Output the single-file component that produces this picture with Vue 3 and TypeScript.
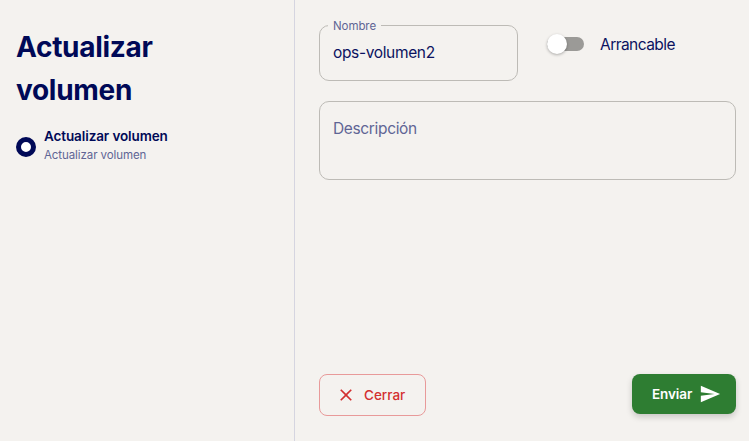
<script setup lang="ts">
import { ref } from "vue";

const nombre = ref("ops-volumen2");
const descripcion = ref("");
const arrancable = ref(false);
</script>

<template>
  <div class="page">
    <aside class="side">
      <h1>Actualizar volumen</h1>
      <div class="step">
        <span class="dot"></span>
        <div>
          <div class="step-title">Actualizar volumen</div>
          <div class="step-sub">Actualizar volumen</div>
        </div>
      </div>
    </aside>
    <main class="main">
      <div class="row">
        <fieldset class="field name">
          <legend>Nombre</legend>
          <input v-model="nombre" />
        </fieldset>
        <label class="switch">
          <span class="track"><span class="thumb"></span></span>
          <input v-model="arrancable" type="checkbox" />
          <span>Arrancable</span>
        </label>
      </div>
      <div class="field desc">
        <textarea v-model="descripcion" placeholder="Descripción"></textarea>
      </div>
      <div class="actions">
        <button class="close" type="button">
          <svg width="24" height="24" viewBox="0 0 24 24" fill="currentColor">
            <path d="M19 6.41 17.59 5 12 10.59 6.41 5 5 6.41 10.59 12 5 17.59 6.41 19 12 13.41 17.59 19 19 17.59 13.41 12z" />
          </svg>
          Cerrar
        </button>
        <button class="send" type="button">
          Enviar
          <svg width="24" height="24" viewBox="0 0 24 24" fill="currentColor">
            <path d="M2.01 21 23 12 2.01 3 2 10l15 2-15 2z" />
          </svg>
        </button>
      </div>
    </main>
  </div>
</template>

<style>
body {
  background: #f4f2ef;
}
</style>

<style scoped>
.page {
  display: flex;
  width: 749px;
  height: 441px;
  overflow: hidden;
  background: #f4f2ef;
  color: #000957;
  font-family: Inter, "Liberation Sans", sans-serif;
}
.side {
  box-sizing: border-box;
  width: 295px;
  flex: none;
  padding: 0 16px;
  border-right: 1px solid #d5d5e0;
}
h1 {
  width: 180px;
  margin: 26px 0 0;
  font-size: 28px;
  font-weight: 700;
  line-height: 43px;
  letter-spacing: -0.3px;
}
.step {
  display: flex;
  align-items: center;
  gap: 8px;
  margin-top: 15px;
}
.dot {
  box-sizing: border-box;
  width: 20px;
  height: 20px;
  border: 5px solid #000957;
  border-radius: 50%;
  background: #fff;
}
.step-title {
  font-size: 13.5px;
  font-weight: 600;
  line-height: 18px;
  letter-spacing: -0.1px;
}
.step-sub {
  font-size: 11.5px;
  line-height: 21px;
  letter-spacing: -0.08px;
  color: #5f6595;
}
.main {
  box-sizing: border-box;
  flex: 1;
  display: flex;
  flex-direction: column;
  padding: 25px 13px 25px 24px;
}
.row {
  display: flex;
  align-items: flex-start;
  gap: 29px;
}
.field {
  box-sizing: border-box;
  margin: 0;
  border: 1px solid #bdbbb6;
  border-radius: 10px;
}
.name {
  position: relative;
  width: 199px;
  height: 56px;
  padding: 0 13px;
}
legend {
  position: absolute;
  top: -7px;
  left: 8px;
  padding: 0 5px;
  background: #f4f2ef;
  font-size: 11.5px;
  line-height: 14px;
  letter-spacing: -0.08px;
  color: #5f6595;
}
.name input {
  display: block;
  width: 100%;
  height: 52px;
  padding: 0;
  border: 0;
  outline: 0;
  background: none;
  color: #0b1260;
  font: 400 15.5px Inter, "Liberation Sans", sans-serif;
  letter-spacing: -0.35px;
}
.switch {
  display: flex;
  align-items: center;
  gap: 16px;
  height: 38px;
  font-size: 15.5px;
  letter-spacing: -0.55px;
  color: #0b1260;
}
.switch input {
  display: none;
}
.track {
  position: relative;
  display: block;
  width: 37px;
  height: 14px;
  border-radius: 7px;
  background: #9b9a97;
}
.thumb {
  position: absolute;
  top: -3px;
  left: 0;
  width: 20px;
  height: 20px;
  border-radius: 50%;
  background: #fff;
  box-shadow: 0 1px 3px rgba(0, 0, 0, 0.3);
}
.desc {
  height: 79px;
  margin-top: 20px;
  padding: 15px 13px 0;
}
textarea {
  display: block;
  width: 100%;
  height: 50px;
  padding: 0;
  border: 0;
  outline: 0;
  resize: none;
  background: none;
  color: #0b1260;
  font: 400 15.5px/24px Inter, "Liberation Sans", sans-serif;
  letter-spacing: -0.35px;
}
textarea::placeholder {
  color: #5f6595;
  opacity: 1;
}
.actions {
  display: flex;
  justify-content: space-between;
  align-items: flex-start;
  margin-top: auto;
}
button {
  display: flex;
  align-items: center;
  box-sizing: border-box;
  border-radius: 8px;
  font-family: Inter, "Liberation Sans", sans-serif;
  font-size: 13.5px;
  cursor: pointer;
}
.close {
  width: 107px;
  height: 42px;
  padding: 0 0 0 16px;
  gap: 8px;
  border: 1px solid #e89a9a;
  background: none;
  color: #d32f2f;
  font-weight: 500;
}
.close svg {
  width: 20px;
  height: 20px;
}
.send {
  width: 104px;
  height: 40px;
  padding: 0 0 0 20px;
  gap: 7px;
  border: 0;
  background: #2e7d32;
  color: #fff;
  font-weight: 600;
  letter-spacing: -0.1px;
  box-shadow: 0 3px 6px rgba(0, 0, 0, 0.18);
}
.send svg {
  width: 22px;
  height: 22px;
}
</style>
